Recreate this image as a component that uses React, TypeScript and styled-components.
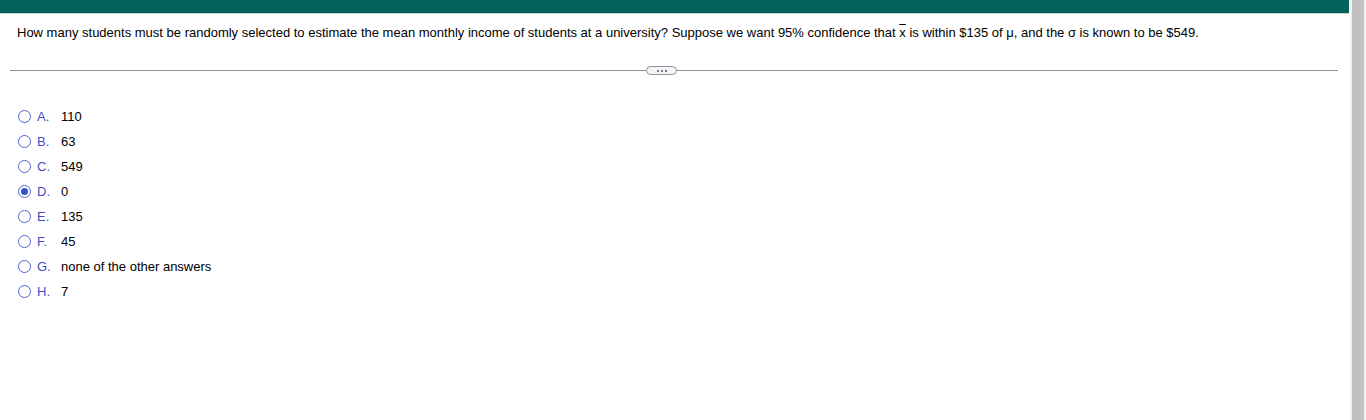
import React from "react";
import styled, { createGlobalStyle } from "styled-components";

const Global = createGlobalStyle`
  html, body { margin: 0; padding: 0; background: #fff; }
  body { font-family: "Liberation Sans", Arial, sans-serif; color: #000; }
`;

const Page = styled.div`
  display: flex;
  width: 1366px;
  height: 420px;
  overflow: hidden;
`;

const Main = styled.div`
  flex: 1;
  display: flex;
  flex-direction: column;
`;

const TopBar = styled.div`
  height: 13px;
  background: #03635a;
  border-bottom: 1px solid #c9d0d8;
`;

const Question = styled.div`
  padding: 11px 0 0 17px;
  font-size: 13px;
  line-height: 15px;
  height: 28px;
`;

const Bar = styled.span`
  text-decoration: overline;
`;

const DividerRow = styled.div`
  position: relative;
  margin: 13px 11px 0 10px;
  height: 9px;
  display: flex;
  align-items: center;
`;

const Line = styled.div`
  position: absolute;
  left: 0;
  right: 0;
  top: 4px;
  height: 1px;
  background: #8f9099;
`;

const Pill = styled.div`
  position: relative;
  width: 29px;
  height: 7px;
  border: 1px solid #8f9099;
  border-radius: 5px;
  background: #f4f5f7;
  display: flex;
  align-items: center;
  justify-content: center;
  gap: 2px;
  margin-left: 636px;
`;

const Dot = styled.span`
  width: 2px;
  height: 2px;
  border-radius: 50%;
  background: #4a4f66;
`;

const Options = styled.div`
  display: flex;
  flex-direction: column;
  padding: 29px 0 0 18px;
`;

const Row = styled.label`
  display: flex;
  align-items: center;
  height: 25px;
  font-size: 13px;
`;

const Radio = styled.span<{ $checked?: boolean }>`
  box-sizing: border-box;
  width: 13px;
  height: 13px;
  border-radius: 50%;
  border: 1.4px solid #4f66d6;
  display: flex;
  align-items: center;
  justify-content: center;
  &::after {
    content: "";
    display: ${(p) => (p.$checked ? "block" : "none")};
    width: 7px;
    height: 7px;
    border-radius: 50%;
    background: #3551cc;
  }
`;

const Letter = styled.span`
  color: #3b4fc4;
  margin-left: 6px;
  width: 24px;
`;

const Value = styled.span`
  color: #000;
`;

const Scroll = styled.div`
  width: 17px;
  display: flex;
  background: #f1f1f1;
  padding: 0 2px 0 2px;
  box-sizing: border-box;
  border-left: 1px solid #fff;
`;

const Thumb = styled.div`
  flex: 1;
  background: #c1c1c1;
`;

const options = [
  ["A.", "110"],
  ["B.", "63"],
  ["C.", "549"],
  ["D.", "0"],
  ["E.", "135"],
  ["F.", "45"],
  ["G.", "none of the other answers"],
  ["H.", "7"],
];

export default function App() {
  return (
    <Page>
      <Global />
      <Main>
        <TopBar />
        <Question>
          How many students must be randomly selected to estimate the mean monthly income of students at a university? Suppose we want 95% confidence that <Bar>x</Bar> is within $135 of μ, and the σ is known to be $549.
        </Question>
        <DividerRow>
          <Line />
          <Pill>
            <Dot />
            <Dot />
            <Dot />
          </Pill>
        </DividerRow>
        <Options>
          {options.map(([l, v]) => (
            <Row key={l}>
              <Radio $checked={l === "D."} />
              <Letter>{l}</Letter>
              <Value>{v}</Value>
            </Row>
          ))}
        </Options>
      </Main>
      <Scroll>
        <Thumb />
      </Scroll>
    </Page>
  );
}
